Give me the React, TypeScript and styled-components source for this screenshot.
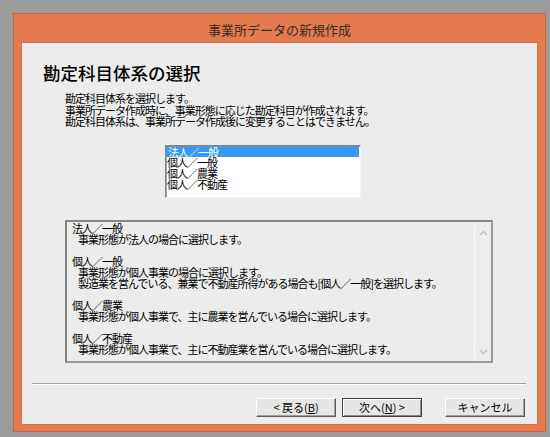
import styled, { createGlobalStyle } from 'styled-components';

const GlobalStyle = createGlobalStyle`
  html, body {
    margin: 0;
    padding: 0;
    background: #9b9b9b;
  }
  * {
    box-sizing: border-box;
  }
`;

const uiFont = `"MS UI Gothic", "Noto Sans CJK JP", "Noto Sans", sans-serif`;

const Screen = styled.div`
  width: 550px;
  height: 437px;
  padding: 13px 0 0 13px;
  background: #9b9b9b;
  overflow: hidden;
`;

const Window = styled.div`
  width: 533px;
  height: 419px;
  display: flex;
  flex-direction: column;
  background: #e57a4f;
  border: 1px solid #c96641;
  padding: 0 7px 6px 7px;
`;

const TitleBar = styled.div`
  height: 28px;
  display: flex;
  align-items: center;
  justify-content: center;
  font-family: ${uiFont};
  font-size: 13px;
  color: #3a2a24;
  padding-top: 2px;
`;

const Client = styled.div`
  flex: 1;
  display: flex;
  flex-direction: column;
  align-items: flex-start;
  background: #ececec;
  border: 1px solid #d3724d;
  padding: 18px 12px 0 0;
  font-family: ${uiFont};
  color: #000;
`;

const Heading = styled.h1`
  margin: 0 0 0 21px;
  font-size: 17.5px;
  line-height: 24px;
  font-weight: 500;
`;

const Intro = styled.div`
  margin: 8px 0 0 43px;
  font-size: 11px;
  line-height: 11.5px;
  letter-spacing: -1px;
  white-space: nowrap;
`;

const ListBox = styled.div`
  margin: 17px 0 0 143px;
  width: 196px;
  height: 53px;
  background: #fff;
  border: 1px solid;
  border-color: #828282 #f4f4f4 #f4f4f4 #828282;
  box-shadow: inset 1px 1px 0 #a0a0a0;
  padding: 0 1px 0 0;
`;

const ListItem = styled.div<{ $selected?: boolean }>`
  height: 11px;
  line-height: 10px;
  font-size: 11px;
  letter-spacing: -1px;
  padding-left: 1px;
  white-space: nowrap;
  color: ${({ $selected }) => ($selected ? '#fff' : '#000')};
  background: ${({ $selected }) => ($selected ? '#3399ff' : 'transparent')};
  border-style: dotted;
  border-color: #b2844e;
  border-width: ${({ $selected }) => ($selected ? '1px' : '0')};
`;

const InfoBox = styled.div`
  margin: 22px 0 0 43px;
  width: 428px;
  height: 143px;
  display: flex;
  border: 2px solid;
  border-color: #858585 #9a9a9a #9a9a9a #858585;
  background: #ececec;
`;

const InfoText = styled.div`
  flex: 1;
  padding: 1px 0 0 5px;
  font-size: 11px;
  line-height: 11px;
  letter-spacing: -1px;
  white-space: nowrap;
`;

const InfoLine = styled.div<{ $indent?: boolean }>`
  height: 11px;
  padding-left: ${({ $indent }) => ($indent ? '6px' : '0')};
`;

const ScrollBar = styled.div`
  width: 17px;
  display: flex;
  flex-direction: column;
  justify-content: space-between;
  align-items: center;
  background: #ededed;
  border-left: 1px solid #fafafa;
  padding: 8px 0 6px;
`;

const Separator = styled.div`
  margin: 20px 0 0 10px;
  width: 494px;
  height: 2px;
  border-top: 1px solid #a0a0a0;
  border-bottom: 1px solid #fff;
`;

const ButtonRow = styled.div`
  align-self: stretch;
  display: flex;
  justify-content: flex-end;
  margin-top: 13px;
`;

const Button = styled.div<{ $default?: boolean; $gap?: number }>`
  width: 80px;
  height: 19px;
  margin-left: ${({ $gap }) => $gap ?? 0}px;
  display: flex;
  align-items: center;
  justify-content: center;
  font-size: 11px;
  white-space: pre;
  background: #e6e6e6;
  border: 1px solid;
  border-color: ${({ $default }) =>
    $default ? '#404040' : '#ffffff #5a5a5a #5a5a5a #ffffff'};
  box-shadow: ${({ $default }) =>
    $default
      ? 'inset 1px 1px 0 #fff, inset -1px -1px 0 #8a8a8a'
      : 'inset -1px -1px 0 #a0a0a0'};
  u {
    text-decoration: underline;
  }
`;

const Chevron = ({ up }: { up?: boolean }) => (
  <svg width="9" height="6" viewBox="0 0 9 6">
    <path
      d={up ? 'M1 5 L4.5 1.5 L8 5' : 'M1 1 L4.5 4.5 L8 1'}
      fill="none"
      stroke="#c4c4c4"
      strokeWidth="1.6"
    />
  </svg>
);

const items = ['法人／一般', '個人／一般', '個人／農業', '個人／不動産'];

const info: { text: string; indent?: boolean }[] = [
  { text: '法人／一般' },
  { text: '事業形態が法人の場合に選択します。', indent: true },
  { text: '' },
  { text: '個人／一般' },
  { text: '事業形態が個人事業の場合に選択します。', indent: true },
  { text: '製造業を営んでいる、兼業で不動産所得がある場合も[個人／一般]を選択します。', indent: true },
  { text: '' },
  { text: '個人／農業' },
  { text: '事業形態が個人事業で、主に農業を営んでいる場合に選択します。', indent: true },
  { text: '' },
  { text: '個人／不動産' },
  { text: '事業形態が個人事業で、主に不動産業を営んでいる場合に選択します。', indent: true },
];

const App = () => {
  return (
    <Screen>
      <GlobalStyle />
      <Window>
        <TitleBar>事業所データの新規作成</TitleBar>
        <Client>
          <Heading>勘定科目体系の選択</Heading>
          <Intro>
            勘定科目体系を選択します。
            <br />
            事業所データ作成時に、事業形態に応じた勘定科目が作成されます。
            <br />
            勘定科目体系は、事業所データ作成後に変更することはできません。
          </Intro>
          <ListBox>
            {items.map((item, i) => (
              <ListItem key={item} $selected={i === 0}>
                {item}
              </ListItem>
            ))}
          </ListBox>
          <InfoBox>
            <InfoText>
              {info.map((line, i) => (
                <InfoLine key={i} $indent={line.indent}>
                  {line.text}
                </InfoLine>
              ))}
            </InfoText>
            <ScrollBar>
              <Chevron up />
              <Chevron />
            </ScrollBar>
          </InfoBox>
          <Separator />
          <ButtonRow>
            <Button>{'< 戻る('}<u>B</u>{')'}</Button>
            <Button $default $gap={6}>
              {'次へ('}<u>N</u>{') >'}
            </Button>
            <Button $gap={23}>キャンセル</Button>
          </ButtonRow>
        </Client>
      </Window>
    </Screen>
  );
};

export default App;
